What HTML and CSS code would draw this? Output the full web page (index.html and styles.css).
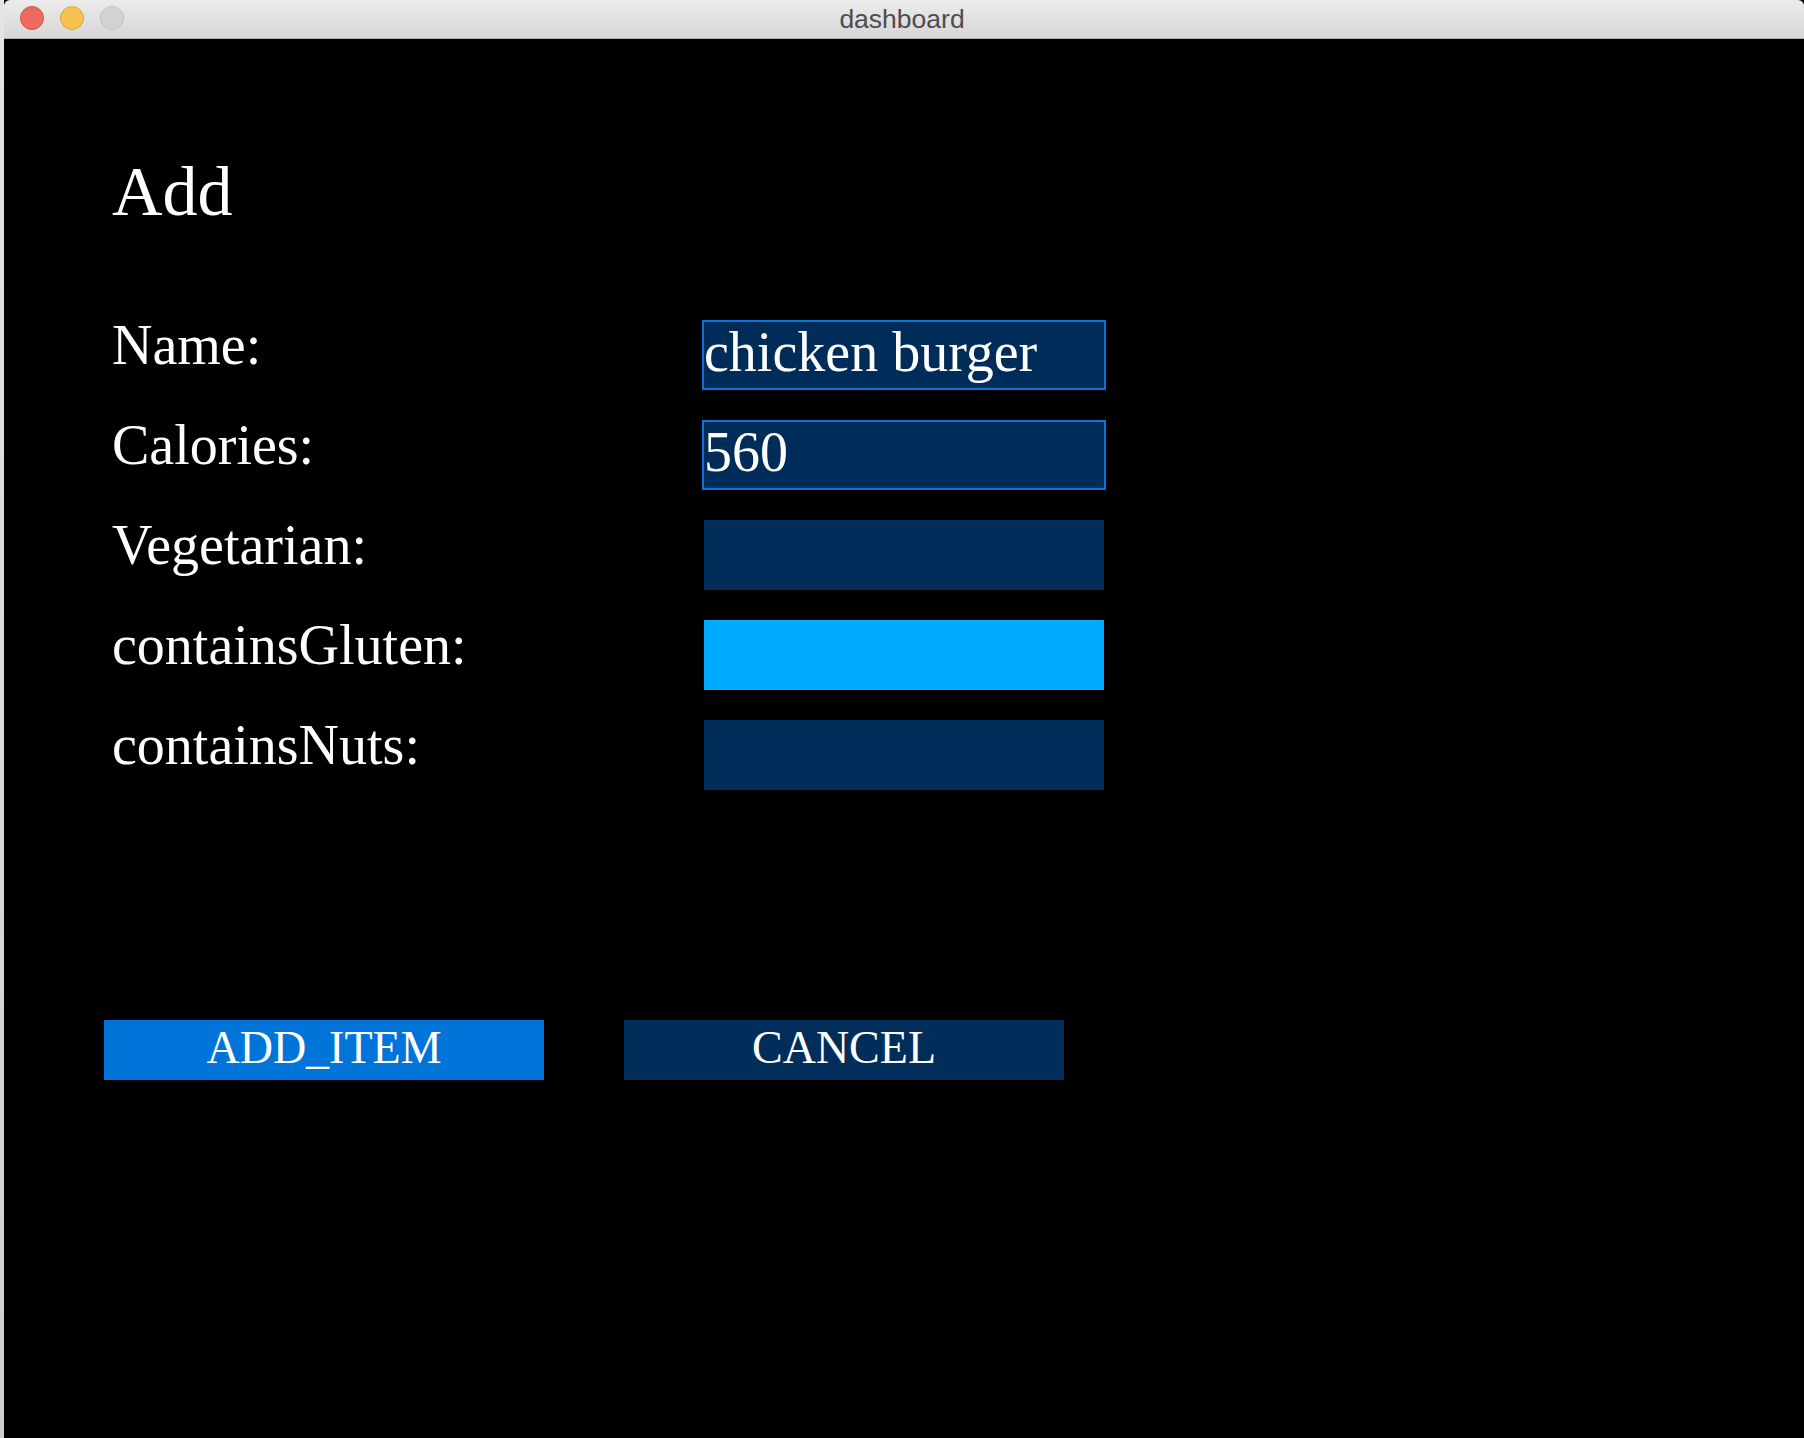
FILE: index.html
```html
<!DOCTYPE html>
<html lang="en">
<head>
<meta charset="utf-8">
<title>dashboard</title>
<link rel="stylesheet" href="styles.css">
</head>
<body>
<div class="desktop">
  <div class="strip"></div>
  <div class="window">
    <div class="titlebar">
      <div class="lights">
        <span class="light red"></span>
        <span class="light yellow"></span>
        <span class="light gray"></span>
      </div>
      <div class="title">dashboard</div>
    </div>
    <div class="content">
      <h1 class="heading">Add</h1>
      <div class="form">
        <div class="label">Name:</div>
        <input class="field" type="text" value="chicken burger">
        <div class="label">Calories:</div>
        <input class="field" type="text" value="560">
        <div class="label">Vegetarian:</div>
        <div class="toggle"></div>
        <div class="label">containsGluten:</div>
        <div class="toggle on"></div>
        <div class="label">containsNuts:</div>
        <div class="toggle"></div>
      </div>
      <div class="buttons">
        <button class="btn primary">ADD_ITEM</button>
        <button class="btn secondary">CANCEL</button>
      </div>
    </div>
  </div>
</div>
</body>
</html>
```

FILE: styles.css
```css
html, body {
  margin: 0;
  padding: 0;
  height: 100%;
  background: #000;
}

.desktop {
  display: flex;
  height: 1438px;
  overflow: hidden;
}

.strip {
  width: 4px;
  flex: none;
  background: linear-gradient(#e4e4e4, #cfcfcf);
}

.window {
  flex: 1;
  display: flex;
  flex-direction: column;
  background: #000;
  border-radius: 6px 6px 0 8px;
  overflow: hidden;
}

.titlebar {
  position: relative;
  height: 38px;
  flex: none;
  background: linear-gradient(#ececec, #d6d6d6);
  border-bottom: 1px solid #b0b0b0;
  display: flex;
  align-items: center;
  justify-content: center;
}

.lights {
  position: absolute;
  left: 16px;
  top: 6px;
  display: flex;
  gap: 16px;
}

.light {
  width: 24px;
  height: 24px;
  border-radius: 50%;
  box-sizing: border-box;
}

.light.red {
  background: #ee6a5f;
  border: 1px solid #d5544c;
}

.light.yellow {
  background: #f6c24f;
  border: 1px solid #d9a33f;
}

.light.gray {
  background: #d3d3d3;
  border: 1px solid #bdbdbd;
}

.title {
  font-family: "Liberation Sans", Arial, sans-serif;
  font-size: 26.5px;
  color: #4d4d4d;
  line-height: 38px;
  margin-left: -4px;
}

.content {
  flex: 1;
  padding-left: 100px;
  color: #fff;
  font-family: "Liberation Serif", "Times New Roman", serif;
}

.heading {
  margin: 113px 0 0 8px;
  font-size: 70px;
  font-weight: normal;
  line-height: 80px;
}

.form {
  margin-top: 88px;
  padding-left: 8px;
  display: grid;
  grid-template-columns: 590px 404px;
  grid-auto-rows: 70px;
  row-gap: 30px;
}

.label {
  font-size: 56px;
  line-height: 50px;
  white-space: nowrap;
}

.field {
  box-sizing: border-box;
  width: 404px;
  height: 70px;
  margin: 0;
  padding: 0 0 7px 0;
  border: 2px solid #0a74da;
  background: #002c5a;
  color: #fff;
  font-family: "Liberation Serif", "Times New Roman", serif;
  font-size: 56px;
  outline: none;
}

.toggle {
  width: 400px;
  height: 70px;
  margin-left: 2px;
  background: #002d5a;
}

.toggle.on {
  background: #00aaff;
}

.buttons {
  margin-top: 230px;
  display: flex;
  gap: 80px;
}

.btn {
  width: 440px;
  height: 60px;
  border: none;
  margin: 0;
  padding: 0 0 4px 0;
  font-family: "Liberation Serif", "Times New Roman", serif;
  font-size: 46px;
  line-height: 56px;
  color: #fff;
}

.btn.primary {
  background: #0074d9;
}

.btn.secondary {
  background: #002d5a;
}
```
